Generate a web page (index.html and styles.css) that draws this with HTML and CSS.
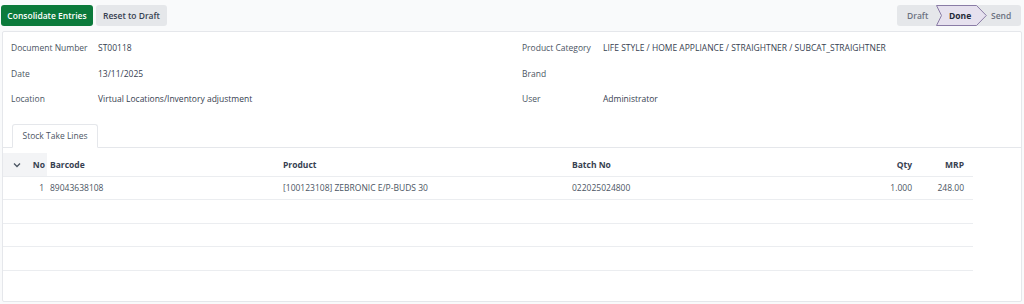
FILE: index.html
```html
<!DOCTYPE html>
<html>
<head>
<meta charset="utf-8">
<link rel="stylesheet" href="styles.css">
</head>
<body>
<div class="topbar">
  <div class="actions">
    <button class="btn btn-primary">Consolidate Entries</button>
    <button class="btn btn-secondary">Reset to Draft</button>
  </div>
  <div class="statusbar">
    <span class="stage">Draft</span>
    <span class="stage stage-current">
      <svg class="stage-shape" width="51" height="21" viewBox="0 0 51 21"><polygon points="0.5,0.5 40.5,0.5 50.3,10.5 40.5,20.5 0.5,20.5 5.5,10.5" fill="#e6e1ee" stroke="#8a7ca6" stroke-width="1"/></svg>
      <span class="stage-label">Done</span>
    </span>
    <span class="stage stage-last">Send</span>
  </div>
</div>
<div class="sheet">
  <div class="fields">
    <div class="group group-left">
      <div class="field"><span class="label">Document Number</span><span class="value">ST00118</span></div>
      <div class="field"><span class="label">Date</span><span class="value">13/11/2025</span></div>
      <div class="field"><span class="label">Location</span><span class="value">Virtual Locations/Inventory adjustment</span></div>
    </div>
    <div class="group group-right">
      <div class="field"><span class="label">Product Category</span><span class="value">LIFE STYLE / HOME APPLIANCE / STRAIGHTNER / SUBCAT_STRAIGHTNER</span></div>
      <div class="field"><span class="label">Brand</span><span class="value"></span></div>
      <div class="field"><span class="label">User</span><span class="value">Administrator</span></div>
    </div>
  </div>
  <div class="tabs">
    <div class="tab">Stock Take Lines</div>
  </div>
  <table class="lines">
    <thead>
      <tr>
        <th class="c-toggle"><svg width="8" height="6" viewBox="0 0 8 6"><path d="M1 1.5 L4 4.5 L7 1.5" fill="none" stroke="#4b5563" stroke-width="1.3"/></svg></th>
        <th class="c-no num">No</th>
        <th class="c-barcode">Barcode</th>
        <th class="c-product">Product</th>
        <th class="c-batch">Batch No</th>
        <th class="c-qty num">Qty</th>
        <th class="c-mrp num">MRP</th>
      </tr>
    </thead>
    <tbody>
      <tr>
        <td class="c-toggle"></td>
        <td class="num">1</td>
        <td>89043638108</td>
        <td>[100123108] ZEBRONIC E/P-BUDS 30</td>
        <td>022025024800</td>
        <td class="num">1.000</td>
        <td class="num">248.00</td>
      </tr>
      <tr class="empty"><td colspan="7"></td></tr>
      <tr class="empty"><td colspan="7"></td></tr>
      <tr class="empty"><td colspan="7"></td></tr>
      <tr class="empty last"><td colspan="7"></td></tr>
    </tbody>
  </table>
</div>
</body>
</html>
```
FILE: styles.css
```css
* { box-sizing: border-box; }
html, body { margin: 0; padding: 0; }
body {
  width: 1024px;
  height: 304px;
  background: #f9fafb;
  font-family: "Open Sans", "Noto Sans", sans-serif;
  font-size: 8.5px;
  color: #374151;
  overflow: hidden;
}
.topbar {
  display: flex;
  justify-content: space-between;
  align-items: center;
  height: 31px;
  padding: 0 3px 0 1px;
}
.actions { display: flex; gap: 3px; }
.btn {
  height: 21px;
  border: none;
  border-radius: 3px;
  font-family: inherit;
  font-size: 8.5px;
  font-weight: 600;
  padding: 0;
  white-space: nowrap;
  cursor: pointer;
}
.btn-primary { background: #0b7a3b; color: #fff; width: 92px; }
.btn-secondary { background: #e5e7ea; color: #374151; width: 71px; }
.statusbar {
  display: flex;
  align-items: center;
  height: 21px;
  width: 124px;
  background: #e5e7ea;
  border-radius: 3px;
  font-weight: 600;
  color: #6b7280;
}
.stage { display: flex; align-items: center; height: 100%; }
.stage:first-child { padding-left: 10px; width: 39px; }
.stage-current {
  position: relative;
  width: 51px;
  padding-left: 13px;
  color: #1f2937;
  font-weight: 700;
}
.stage-shape { position: absolute; left: 0; top: 0; }
.stage-label { position: relative; }
.stage-last { padding-left: 4px; }
.sheet {
  margin: 0 2px 2px 2px;
  height: 271px;
  background: #fff;
  border: 1px solid #e5e7eb;
  border-radius: 2px;
  overflow: hidden;
}
.fields {
  display: grid;
  grid-template-columns: 511px 1fr;
  padding: 3px 0 0 8px;
}
.field {
  display: flex;
  align-items: center;
  height: 25.5px;
}
.label { color: #4b5563; flex: 0 0 87px; }
.group-right .label { flex-basis: 81px; }
.value { color: #374151; }
.tabs {
  margin-top: 12px;
  padding-left: 9px;
  border-bottom: 1px solid #e5e7eb;
  display: flex;
}
.tab {
  width: 86px;
  height: 24px;
  margin-bottom: -1px;
  border: 1px solid #e5e7eb;
  border-bottom-color: #fff;
  border-radius: 3px 3px 0 0;
  background: #fff;
  display: flex;
  align-items: center;
  justify-content: center;
  color: #4b5563;
}
.lines {
  margin-top: 5px;
  width: 970px;
  border-collapse: collapse;
  table-layout: fixed;
}
.lines th, .lines td {
  height: 23.5px;
  padding: 0 3px;
  text-align: left;
  white-space: nowrap;
  border-bottom: 1px solid #ebedf0;
}
.lines th { font-weight: 700; color: #374151; }
.lines td { color: #4b5563; }
.lines .num { text-align: right; }
.lines th.c-toggle { background: #f3f4f6; width: 23px; padding-left: 10px; }
.lines th.c-no { background: #f3f4f6; width: 21px; padding-right: 2px; }
.c-barcode { width: 233px; }
.c-product { width: 289px; }
.c-batch { width: 290px; }
.c-qty { width: 56px; }
.c-mrp { width: 58px; padding-right: 9px !important; }
.lines td:last-child { padding-right: 9px; }
.lines tr.last td { border-bottom: none; height: 30px; }
```
